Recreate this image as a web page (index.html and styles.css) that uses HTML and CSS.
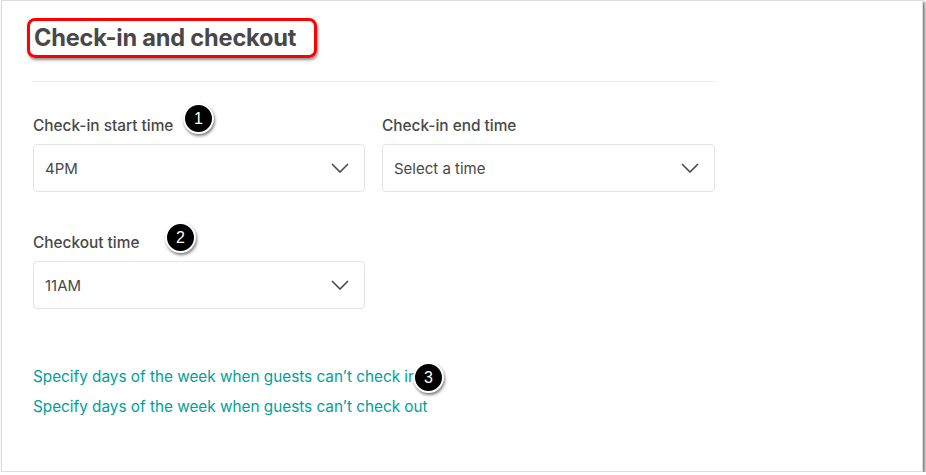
FILE: index.html
```html
<!DOCTYPE html>
<html lang="en">
<head>
  <meta charset="UTF-8" />
  <title>Check-in and checkout</title>
  <link rel="stylesheet" href="styles.css">
</head>
<body>
  <div class="panel">
    <div class="content">
      <h2 class="title"><span class="highlight">Check-in and checkout</span></h2>
      <hr class="divider">

      <div class="row">
        <div class="field">
          <label class="label">Check-in start time <span class="badge badge-1">1</span></label>
          <div class="select">
            <span>4PM</span>
            <svg class="chevron" width="18" height="10" viewBox="0 0 18 10"><path d="M1 1l8 8 8-8" fill="none" stroke="#484848" stroke-width="1.6"/></svg>
          </div>
        </div>
        <div class="field">
          <label class="label">Check-in end time</label>
          <div class="select">
            <span>Select a time</span>
            <svg class="chevron" width="18" height="10" viewBox="0 0 18 10"><path d="M1 1l8 8 8-8" fill="none" stroke="#484848" stroke-width="1.6"/></svg>
          </div>
        </div>
      </div>

      <div class="row row-second">
        <div class="field">
          <label class="label">Checkout time <span class="badge badge-2">2</span></label>
          <div class="select">
            <span>11AM</span>
            <svg class="chevron" width="18" height="10" viewBox="0 0 18 10"><path d="M1 1l8 8 8-8" fill="none" stroke="#484848" stroke-width="1.6"/></svg>
          </div>
        </div>
      </div>

      <div class="links">
        <a href="#" class="link">Specify days of the week when guests can’t check in<span class="badge badge-3">3</span></a>
        <a href="#" class="link">Specify days of the week when guests can’t check out</a>
      </div>
    </div>
  </div>
</body>
</html>
```
FILE: styles.css
```css
body {
  margin: 0;
  background: #fff;
  font-family: Inter, "Open Sans", sans-serif;
  color: #484848;
}

.panel {
  margin-left: 1px;
  width: 922px;
  height: 472px;
  background: #fff;
  border: 1px solid #dcdcdc;
  box-shadow: 2px 2px 3px rgba(0, 0, 0, 0.55);
  box-sizing: border-box;
}

.content {
  width: 683px;
  padding: 17px 0 0 31px;
}

.title {
  margin: 0;
  font-size: 23.6px;
  font-weight: 700;
  letter-spacing: -0.2px;
  line-height: 30px;
}

.highlight {
  display: inline-block;
  margin-left: -6px;
  padding: 2px 18px 2px 4px;
  border: 3px solid #f00;
  border-radius: 8px;
  box-shadow: 1px 2px 3px rgba(0, 0, 0, 0.45);
}

.divider {
  border: none;
  border-top: 1px solid #ebebeb;
  margin: 23px 0 0 0;
}

.row {
  display: grid;
  grid-template-columns: 332px 333px;
  gap: 17px;
  margin-top: 33px;
}

.row-second {
  margin-top: 40px;
}

.label {
  position: relative;
  display: block;
  font-size: 15.4px;
  font-weight: 500;
  line-height: 22px;
  margin-bottom: 7px;
}

.select {
  height: 48px;
  border: 1px solid #e4e4e4;
  border-radius: 4px;
  box-sizing: border-box;
  display: flex;
  align-items: center;
  justify-content: space-between;
  padding: 0 15px 0 11px;
  font-size: 15px;
}

.chevron {
  display: block;
}

.links {
  margin-top: 53px;
  display: flex;
  flex-direction: column;
}

.link {
  position: relative;
  color: #00a09a;
  text-decoration: none;
  font-size: 15.3px;
  line-height: 30px;
}

.badge {
  position: absolute;
  width: 27px;
  height: 27px;
  border-radius: 50%;
  background: #000;
  border: 2px solid #fff;
  box-shadow: 1px 2px 3px rgba(0, 0, 0, 0.5);
  color: #fff;
  font-size: 16px;
  font-weight: 400;
  display: flex;
  align-items: center;
  justify-content: center;
  font-family: "Liberation Sans", sans-serif;
}

.badge-1 {
  left: 150px;
  top: -12px;
}

.badge-2 {
  left: 132px;
  top: -10px;
}

.badge-3 {
  left: 380px;
  top: 0px;
}
```
